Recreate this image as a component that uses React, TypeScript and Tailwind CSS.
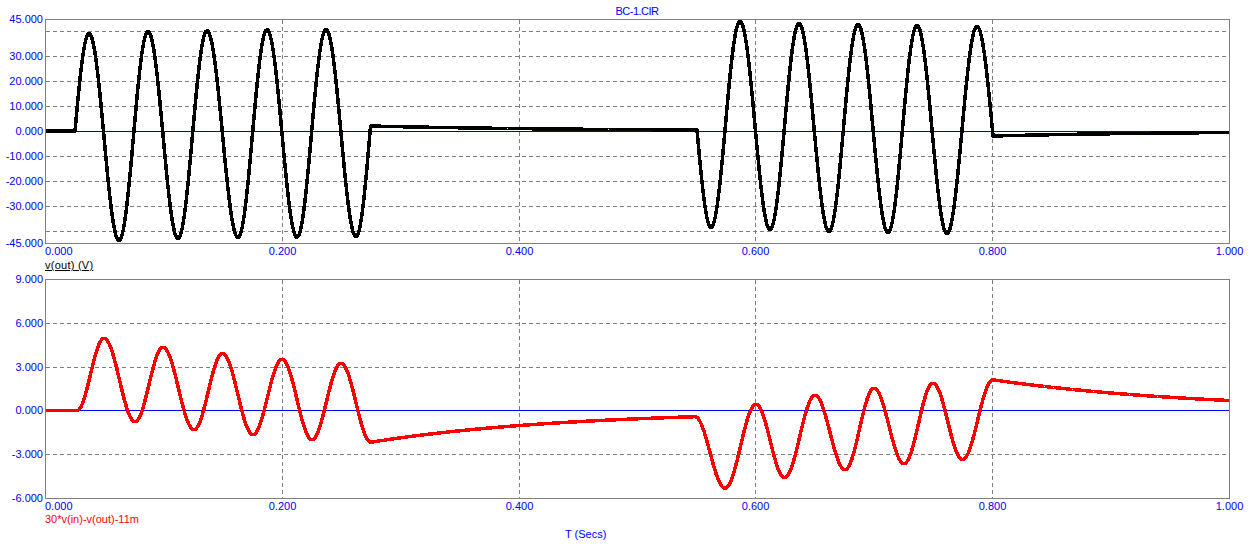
type Seg = [shape: 'l' | 'q' | 'i' | 'c' | 'e', x: number, y: number];

const PLOT_LEFT = 45.5;
const PLOT_RIGHT = 1229.5;
// turning points below are the outer edge of the line, this brings them to its centre
const LINE_INSET = 1.3;
const X_TICKS = [
  { x: 282.5, label: '0.200' },
  { x: 519.5, label: '0.400' },
  { x: 755.5, label: '0.600' },
  { x: 992.5, label: '0.800' },
  { x: 1229.5, label: '1.000' },
];

// builds the trace from its turning points, one sample per half pixel
function trace(start: [number, number], zero: number, segs: Seg[]) {
  const pts: string[] = [];
  let [x0, y0] = start;
  for (const [shape, x1, edge] of segs) {
    const curved = shape === 'c' || shape === 'q';
    const y1 = curved ? edge + (edge < y0 ? LINE_INSET : -LINE_INSET) : edge;
    const n = Math.max(1, Math.round((x1 - x0) * 2));
    for (let i = 0; i <= n; i++) {
      const u = i / n;
      const x = x0 + (x1 - x0) * u;
      let y = y0 + (y1 - y0) * u;
      if (shape === 'c') y = y0 + ((y1 - y0) * (1 - Math.cos(Math.PI * u))) / 2;
      if (shape === 'q') y = y0 + (y1 - y0) * Math.sin((Math.PI / 2) * u);
      if (shape === 'i') y = y0 + (y1 - y0) * (1 - Math.cos((Math.PI / 2) * u));
      if (shape === 'e') y = zero + (y0 - zero) * Math.pow((y1 - zero) / (y0 - zero), u);
      pts.push(`${x.toFixed(1)},${y.toFixed(1)}`);
    }
    x0 = x1;
    y0 = y1;
  }
  return pts.join(' ');
}

const voltsTrace = trace([45.5, 131], 131, [
  ['l', 75, 131],
  ['q', 89, 32],
  ['c', 119, 242],
  ['c', 148, 30],
  ['c', 178, 240],
  ['c', 207, 29.5],
  ['c', 238, 239],
  ['c', 267, 28.5],
  ['c', 297, 238.5],
  ['c', 326, 28],
  ['c', 356, 238],
  ['i', 370.5, 126],
  ['e', 697, 130],
  ['q', 711, 229],
  ['c', 740, 20],
  ['c', 770, 231],
  ['c', 799, 22],
  ['c', 829, 233],
  ['c', 858, 23],
  ['c', 888, 234],
  ['c', 917, 24],
  ['c', 947, 235],
  ['c', 977, 25],
  ['i', 993, 136],
  ['e', 1229, 132.5],
]);

const errorTrace = trace([45.5, 410.5], 410.5, [
  ['l', 77, 410.5],
  ['c', 104, 337],
  ['c', 135, 423],
  ['c', 163, 346],
  ['c', 194, 431],
  ['c', 222.5, 352],
  ['c', 253, 436],
  ['c', 282, 358],
  ['c', 312, 441],
  ['c', 341, 362],
  ['c', 371, 443.5],
  ['e', 695, 416.7],
  ['c', 725, 489.5],
  ['c', 756, 403],
  ['c', 784.5, 479],
  ['c', 815, 394],
  ['c', 845, 471],
  ['c', 874, 387],
  ['c', 904, 465],
  ['c', 933, 382],
  ['c', 962.5, 461],
  ['c', 993, 378.5],
  ['e', 1229, 400.5],
]);

type YTick = { y: number; label?: string };

function Plot({
  top,
  height,
  frameTop,
  frameBottom,
  zero,
  zeroColor,
  yTicks,
  points,
  color,
  labelY,
}: {
  top: number;
  height: number;
  frameTop: number;
  frameBottom: number;
  zero: number;
  zeroColor: string;
  yTicks: YTick[];
  points: string;
  color: string;
  labelY: number;
}) {
  return (
    <svg width={1252} height={height} viewBox={`0 ${top} 1252 ${height}`} className="block overflow-visible">
      <g stroke="#808080" strokeWidth={1} strokeDasharray="4 3" shapeRendering="crispEdges">
        {yTicks
          .filter((t) => t.y !== zero && t.y !== frameTop && t.y !== frameBottom)
          .map((t) => (
            <line key={t.y} x1={PLOT_LEFT} x2={PLOT_RIGHT} y1={t.y} y2={t.y} />
          ))}
        {X_TICKS.slice(0, 4).map((t) => (
          <line key={t.x} x1={t.x} x2={t.x} y1={frameTop} y2={frameBottom} />
        ))}
      </g>
      <line
        x1={PLOT_LEFT}
        x2={PLOT_RIGHT}
        y1={zero}
        y2={zero}
        stroke={zeroColor}
        strokeWidth={1}
        shapeRendering="crispEdges"
      />
      <rect
        x={PLOT_LEFT}
        y={frameTop}
        width={PLOT_RIGHT - PLOT_LEFT}
        height={frameBottom - frameTop}
        fill="none"
        stroke="#808080"
        strokeWidth={1}
        shapeRendering="crispEdges"
      />
      <polyline
        points={points}
        fill="none"
        stroke={color}
        strokeWidth={3.5}
        strokeLinejoin="round"
        shapeRendering="crispEdges"
      />
      <g fill="#0000ff" className="text-[11px]">
        {yTicks
          .filter((t) => t.label)
          .map((t) => (
            <text key={t.y} x={43} y={t.y + 3.5} textAnchor="end">
              {t.label}
            </text>
          ))}
        <text x={45} y={labelY}>
          0.000
        </text>
        {X_TICKS.map((t) => (
          <text key={t.x} x={t.x} y={labelY} textAnchor="middle">
            {t.label}
          </text>
        ))}
      </g>
    </svg>
  );
}

export default function App() {
  return (
    <div className="h-[545px] w-[1252px] overflow-hidden bg-white font-['Liberation_Sans',sans-serif] text-[11px] leading-[13px]">
      <div className="ml-[45px] mr-[23px] flex h-[19px] items-start justify-center pt-[5px] tracking-[-0.5px] text-[#0000ff]">
        BC-1.CIR
      </div>
      <Plot
        top={19}
        height={240}
        frameTop={19.5}
        frameBottom={243.5}
        zero={131.5}
        zeroColor="#0000c0"
        yTicks={[
          { y: 19.5, label: '45.000' },
          { y: 31.5 },
          { y: 56.5, label: '30.000' },
          { y: 81.5, label: '20.000' },
          { y: 106.5, label: '10.000' },
          { y: 131.5, label: '0.000' },
          { y: 156.5, label: '-10.000' },
          { y: 181.5, label: '-20.000' },
          { y: 206.5, label: '-30.000' },
          { y: 231.5 },
          { y: 243.5, label: '-45.000' },
        ]}
        points={voltsTrace}
        color="#000000"
        labelY={255}
      />
      <div className="ml-[45px] mr-[23px] flex h-[13px] items-start">
        <span className="tracking-[0.25px] text-black underline">v(out) (V)</span>
      </div>
      <Plot
        top={272}
        height={241}
        frameTop={279.5}
        frameBottom={498.5}
        zero={410.5}
        zeroColor="#0000ff"
        yTicks={[
          { y: 279.5, label: '9.000' },
          { y: 323.5, label: '6.000' },
          { y: 367.5, label: '3.000' },
          { y: 410.5, label: '0.000' },
          { y: 454.5, label: '-3.000' },
          { y: 498.5, label: '-6.000' },
        ]}
        points={errorTrace}
        color="#ff0000"
        labelY={510}
      />
      <div className="ml-[45px] h-[14px] text-[#ff0000]">30*v(in)-v(out)-11m</div>
      <div className="ml-[565px] h-[18px] pt-px text-[#0000ff]">T (Secs)</div>
    </div>
  );
}
